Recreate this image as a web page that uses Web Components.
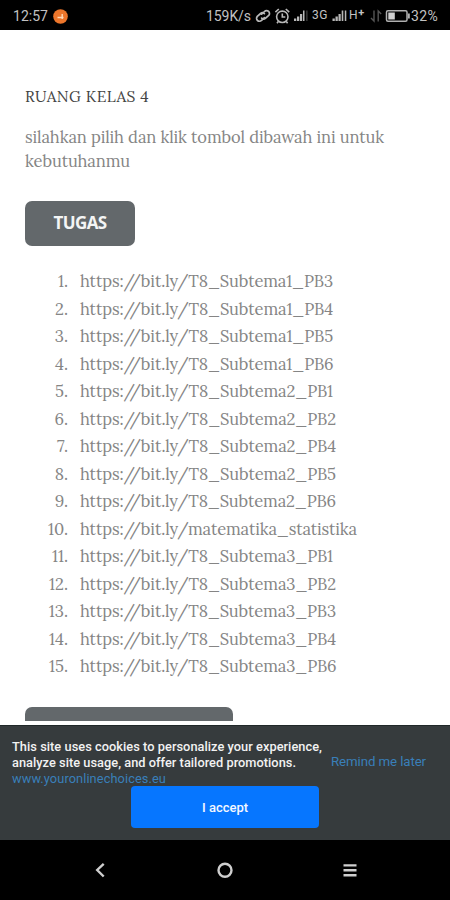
<!DOCTYPE html>
<html lang="id">
<head>
<meta charset="utf-8">
<meta name="viewport" content="width=device-width, initial-scale=1">
<title>Ruang Kelas 4</title>
<style>
    html, body {
        margin: 0;
        height: 900px;
        overflow: hidden;
        background: #fff;
    }
</style>
</head>
<body>
<phone-screen>
    <status-bar slot="top"></status-bar>
    <class-page></class-page>
    <cookie-bar slot="bottom"></cookie-bar>
    <nav-bar slot="bottom"></nav-bar>
</phone-screen>

<script>
// One line of text, tracked so that it fills the given width
class FitText extends HTMLElement {
    constructor() {
        super();
        this.attachShadow({ mode: "open" });
        this.shadowRoot.innerHTML = `
            <style>
                :host { display: block; width: max-content; white-space: nowrap; }
                span { display: inline-block; }
            </style>
            <span><slot></slot></span>
        `;
    }

    connectedCallback() {
        const span = this.shadowRoot.querySelector('span');
        const width = Number(this.getAttribute('width'));
        const natural = span.getBoundingClientRect().width;
        const count = this.textContent.length;
        span.style.letterSpacing = (width - natural) / count + 'px';
    }
}

class PhoneScreen extends HTMLElement {
    constructor() {
        super();
        this.attachShadow({ mode: "open" });
        this.shadowRoot.innerHTML = `
            <style>
                :host {
                    display: flex;
                    flex-direction: column;
                    width: 450px;
                    height: 900px;
                    overflow: hidden;
                    background: #fff;
                }
                main {
                    flex: 1;
                    min-height: 0;
                    overflow: hidden;
                    margin-bottom: 4px;
                }
            </style>
            <slot name="top"></slot>
            <main><slot></slot></main>
            <slot name="bottom"></slot>
        `;
    }
}

class StatusBar extends HTMLElement {
    constructor() {
        super();
        this.attachShadow({ mode: "open" });
        this.shadowRoot.innerHTML = `
            <style>
                :host {
                    display: flex;
                    align-items: center;
                    height: 30px;
                    box-sizing: border-box;
                    padding: 2px 12px 0 13px;
                    background: #000;
                    color: #c2c2c2;
                    font: 14px Roboto, sans-serif;
                }
                svg { display: block; flex: none; }
                .badge { margin-left: 5px; }
                .right { display: flex; align-items: center; margin-left: auto; }
                .small { font-size: 12px; line-height: 14px; margin-top: -2px; }
                .mobile { margin-right: 3px; }
                .data { margin-right: 1px; }
                sup { font-size: 11px; font-weight: bold; line-height: 0; vertical-align: 3px; }
                .battery { margin-right: 1px; }
            </style>
            <fit-text width="35">12:57</fit-text>
            <svg class="badge" width="15" height="15" viewBox="0 0 15 15">
                <circle cx="7.5" cy="7.5" r="7.3" fill="#ed762b"/>
                <path d="M4.5 8.5h6M9.2 5v5" fill="none" stroke="#ffd9b8" stroke-width="1.4"/>
            </svg>
            <div class="right">
                <fit-text width="45">159K/s</fit-text>
                <svg width="23" height="18" viewBox="251 6 23 18" fill="none" stroke="#b8b8b8" stroke-width="1.7" stroke-linecap="round">
                    <path d="M261.6 13.2l2.9-2.7a2.9 2.9 0 0 1 4.2 4l-3.3 2.9a2.8 2.8 0 0 1-3.8-.2M264.4 16.7l-2.8 2.6a2.9 2.9 0 0 1-4.3-3.9l3.3-2.9a2.8 2.8 0 0 1 3.8.2"/>
                </svg>
                <svg width="19" height="18" viewBox="274 6 19 18" fill="none" stroke="#b8b8b8" stroke-width="1.6">
                    <circle cx="282.3" cy="15.8" r="5.7"/>
                    <path d="M275.4 11.2l3.4-3.2M289.2 11.2l-3.4-3.2M282.3 12.5v3.5h3M278.3 20.5l-1.3 1.7M286.3 20.5l1.3 1.7"/>
                </svg>
                <svg width="19" height="18" viewBox="293 6 19 18" fill="#b8b8b8">
                    <path d="M294 20v-2.5h2.3V20zM297 20v-4.5h2.3V20zM300 20v-7h2.2V20z"/>
                    <path d="M303 20V9.5h1.5V20z"/>
                    <path d="M306.4 20V9.5h1V20z" fill="#555"/>
                </svg>
                <fit-text class="small mobile" width="16">3G</fit-text>
                <svg width="18" height="18" viewBox="331 6 18 18" fill="#b8b8b8">
                    <path d="M332.5 20v-2.5h2.3V20zM335.5 20v-4.5h2.3V20zM338.5 20v-7h2.2V20z"/>
                    <path d="M341.7 20V9.5h1.6V20zM344.8 20V9.5h1.5V20z"/>
                </svg>
                <fit-text class="small data" width="16">H<sup>+</sup></fit-text>
                <svg width="19" height="18" viewBox="366 6 19 18" fill="none" stroke="#555" stroke-width="1.4">
                    <path d="M374 9.5V20l-3-3M378.2 20.5V10l3 3"/>
                </svg>
                <svg class="battery" width="25" height="18" viewBox="385 6 25 18">
                    <rect x="386.5" y="9.7" width="20.5" height="10.6" rx="1.5" fill="none" stroke="#b0b0b0" stroke-width="1.5"/>
                    <rect x="388.3" y="11.5" width="6.5" height="7" fill="#d0d0d0"/>
                    <rect x="407.8" y="12.5" width="2" height="5" fill="#b0b0b0"/>
                </svg>
                <fit-text width="27">32%</fit-text>
            </div>
        `;
    }
}

class PageButton extends HTMLElement {
    constructor() {
        super();
        this.attachShadow({ mode: "open" });
        this.shadowRoot.innerHTML = `
            <style>
                :host { display: block; width: max-content; }
                button {
                    display: grid;
                    place-items: center;
                    width: var(--button-width, 110px);
                    height: 45px;
                    padding: 0 0 2px;
                    border: 0;
                    border-radius: 7px;
                    background: #63686b;
                    color: #f4f5f5;
                    font: bold 17px "Open Sans", "Noto Sans", sans-serif;
                }
            </style>
            <button><slot></slot></button>
        `;
    }
}

class LinkItem extends HTMLElement {
    constructor() {
        super();
        this.attachShadow({ mode: "open" });
        this.shadowRoot.innerHTML = `
            <style>
                :host {
                    display: grid;
                    grid-template-columns: 43px 1fr;
                    column-gap: 12px;
                    height: 27.5px;
                    line-height: 27.5px;
                }
                .number { text-align: right; }
            </style>
            <span class="number">${this.getAttribute('number')}.</span>
            <fit-text width="${this.getAttribute('width')}">${this.getAttribute('url')}</fit-text>
        `;
    }
}

class ClassPage extends HTMLElement {
    constructor() {
        super();
        this.attachShadow({ mode: "open" });
        // [path, line width]
        const links = [
            ['T8_Subtema1_PB3', 253],
            ['T8_Subtema1_PB4', 253],
            ['T8_Subtema1_PB5', 253],
            ['T8_Subtema1_PB6', 253.5],
            ['T8_Subtema2_PB1', 253],
            ['T8_Subtema2_PB2', 256],
            ['T8_Subtema2_PB4', 256],
            ['T8_Subtema2_PB5', 256],
            ['T8_Subtema2_PB6', 256],
            ['matematika_statistika', 277],
            ['T8_Subtema3_PB1', 253],
            ['T8_Subtema3_PB2', 256],
            ['T8_Subtema3_PB3', 256],
            ['T8_Subtema3_PB4', 256],
            ['T8_Subtema3_PB6', 256.5]
        ];
        this.shadowRoot.innerHTML = `
            <style>
                :host {
                    display: block;
                    padding: 54px 25px 0;
                    color: #858585;
                    font: 16.5px Lora, "Liberation Serif", serif;
                }
                h1 {
                    margin: 0 0 17px;
                    color: #444;
                    font-size: 15.5px;
                    font-weight: normal;
                    line-height: 24px;
                }
                .intro { line-height: 24px; }
                .first { margin-top: 28px; }
                .links { margin: 22px 0 26px; }
                .next { --button-width: 208px; }
            </style>
            <h1><fit-text width="124">RUANG KELAS 4</fit-text></h1>
            <div class="intro">
                <fit-text width="359">silahkan pilih dan klik tombol dibawah ini untuk</fit-text>
                <fit-text width="105">kebutuhanmu</fit-text>
            </div>
            <page-button class="first"><fit-text width="53">TUGAS</fit-text></page-button>
            <div class="links">
                ${links.map(([path, width], i) => `
                    <link-item number="${i + 1}" width="${width}" url="https://bit.ly/${path}"></link-item>
                `).join('')}
            </div>
            <page-button class="next"></page-button>
        `;
    }
}

class CookieBar extends HTMLElement {
    constructor() {
        super();
        this.attachShadow({ mode: "open" });
        this.shadowRoot.innerHTML = `
            <style>
                :host {
                    display: block;
                    height: 115px;
                    box-sizing: border-box;
                    padding: 13px 12px 0;
                    border-top: 1px solid #202829;
                    background: #363b3d;
                    color: #f2f2f2;
                    font: 500 12.8px/16px Roboto, sans-serif;
                }
                .row { display: flex; justify-content: space-between; align-items: center; height: 48px; }
                .link { color: #397fb9; font-weight: 400; }
                .later { font-size: 13.3px; margin: -3px 12px 0 0; }
                button {
                    display: grid;
                    place-items: center;
                    width: 188px;
                    height: 42px;
                    margin: -1px auto 0;
                    padding: 0;
                    border: 0;
                    border-radius: 4px;
                    background: #0676ff;
                    color: #f4f8ff;
                    font: 500 13px Roboto, sans-serif;
                }
            </style>
            <div class="row">
                <div>
                    <fit-text width="310">This site uses cookies to personalize your experience,</fit-text>
                    <fit-text width="284">analyze site usage, and offer tailored promotions.</fit-text>
                    <fit-text class="link" width="154">www.youronlinechoices.eu</fit-text>
                </div>
                <fit-text class="link later" width="95">Remind me later</fit-text>
            </div>
            <button><fit-text width="46">I accept</fit-text></button>
        `;
    }
}

class NavBar extends HTMLElement {
    constructor() {
        super();
        this.attachShadow({ mode: "open" });
        this.shadowRoot.innerHTML = `
            <style>
                :host {
                    display: flex;
                    justify-content: space-between;
                    align-items: center;
                    height: 60px;
                    box-sizing: border-box;
                    padding: 0 90px;
                    background: #000;
                }
                svg { fill: none; stroke: #cfcfcf; stroke-width: 2.4; }
            </style>
            <svg width="20" height="20" viewBox="0 0 20 20"><path d="M13.7 3.8L7.2 10l6.5 6.5"/></svg>
            <svg width="20" height="20" viewBox="0 0 20 20"><circle cx="10" cy="10.3" r="6.5"/></svg>
            <svg width="20" height="20" viewBox="0 0 20 20"><path d="M3.5 5.4h13M3.5 10.3h13M3.5 15.2h13"/></svg>
        `;
    }
}

customElements.define('fit-text', FitText);
customElements.define('page-button', PageButton);
customElements.define('link-item', LinkItem);
customElements.define('class-page', ClassPage);
customElements.define('cookie-bar', CookieBar);
customElements.define('nav-bar', NavBar);
customElements.define('status-bar', StatusBar);
customElements.define('phone-screen', PhoneScreen);
</script>
</body>
</html>
